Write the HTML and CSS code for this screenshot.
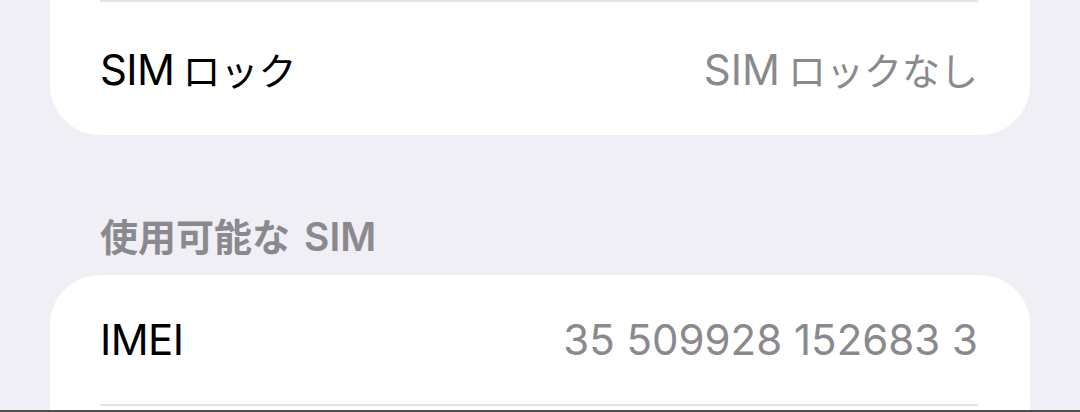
FILE: index.html
```html
<!DOCTYPE html>
<html lang="ja">
<head>
  <meta charset="UTF-8">
  <meta name="viewport" content="width=device-width, initial-scale=1.0">
  <title>SIM</title>
  <link rel="stylesheet" href="styles.css">
</head>
<body>
  <div class="page">
    <div class="card card-bottom">
      <div class="row row-first">
        <span class="label">SIM<span class="ja">ロック</span></span>
        <span class="value">SIM<span class="ja">ロックなし</span></span>
      </div>
    </div>

    <div class="section-header">使用可能な<span class="latin">SIM</span></div>

    <div class="card card-top">
      <div class="row row-sep">
        <span class="label">IMEI</span>
        <span class="value">35 509928 152683 3</span>
      </div>
    </div>
  </div>
  <div class="bottom-bar"></div>
</body>
</html>
```

FILE: styles.css
```css
body {
  margin: 0;
  background-color: #f0eff5;
  font-family: Inter, "Noto Sans CJK JP", sans-serif;
  height: 412px;
  overflow: hidden;
  position: relative;
}
.page {
  padding: 0 50px;
}
.card {
  background-color: #fff;
  padding-left: 50px;
}
.card-bottom {
  border-radius: 0 0 50px 50px;
}
.card-top {
  border-radius: 50px 50px 0 0;
  height: 135px;
}
.row {
  display: flex;
  justify-content: space-between;
  align-items: center;
  margin-right: 52px;
  font-size: 42px;
  box-sizing: border-box;
}
.row-first {
  height: 135px;
  border-top: 2px solid #e3e3e8;
  padding-bottom: 1px;
}
.row-sep {
  height: 131px;
  border-bottom: 2px solid #e3e3e8;
}
.label {
  color: #000;
  letter-spacing: -0.6px;
}
.value {
  color: #8a8a8e;
}
.ja {
  font-family: "Noto Sans CJK JP", sans-serif;
  font-size: 38px;
  letter-spacing: 0;
  margin-left: 8px;
}
.section-header {
  color: #8a8a8e;
  font-family: "Noto Sans CJK JP", sans-serif;
  font-size: 38px;
  font-weight: bold;
  line-height: 48px;
  height: 48px;
  padding: 76px 0 16px 50px;
}
.latin {
  font-family: Inter, sans-serif;
  font-size: 39px;
  font-weight: 600;
  margin-left: 14px;
}
.bottom-bar {
  position: absolute;
  left: 0;
  right: 0;
  bottom: 0;
  height: 2px;
  background-color: #4d4d4d;
}
```
